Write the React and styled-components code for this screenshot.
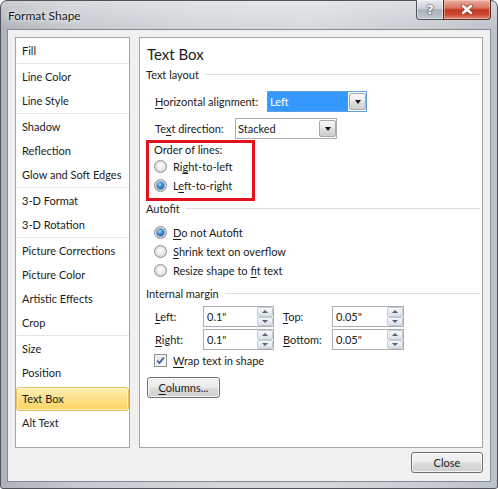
import React from 'react';
import styled, { createGlobalStyle, css } from 'styled-components';

const GlobalStyle = createGlobalStyle`
  html, body { margin: 0; padding: 0; }
  body {
    width: 498px; height: 489px; overflow: hidden;
    font-family: Lato, "Liberation Sans", sans-serif;
    font-size: 11px; color: #1b1b1b;
  }
  * { box-sizing: border-box; }
  u { text-decoration-thickness: 1px; text-underline-offset: 2px; }
`;

const Window = styled.div`
  width: 498px; height: 489px;
  display: flex; flex-direction: column;
  border: 1px solid #4f545a;
  border-radius: 7px 7px 3px 3px;
  padding: 0 6px 6px 6px;
  background:
    linear-gradient(180deg, rgba(255,255,255,0.35) 0px, rgba(255,255,255,0) 28px),
    linear-gradient(90deg, #aeb3b9 0%, #c4c9cf 14%, #d2d6db 40%, #d6dade 62%, #c9ced4 84%, #bcc2c9 100%);
`;

const TitleBar = styled.div`
  height: 28px; flex: none;
  display: flex; align-items: flex-start;
`;

const TitleText = styled.div`
  margin: 7px 0 0 1px;
  line-height: 16px; font-size: 12px; color: #151515;
  text-shadow: 0 0 6px rgba(255,255,255,0.9), 0 0 3px rgba(255,255,255,0.8);
`;

const Captions = styled.div`
  margin-left: auto; margin-top: -1px;
  display: flex;
`;

const HelpCap = styled.div`
  width: 27px; height: 20px;
  display: flex; align-items: center; justify-content: center;
  border: 1px solid #4e545b; border-top: none; border-right: none;
  border-bottom-left-radius: 4px;
  background: linear-gradient(180deg, #e8ebee 0%, #cdd2d7 45%, #aab1b9 52%, #bfc6cd 100%);
  box-shadow: inset 0 0 0 1px rgba(255,255,255,0.45);
  color: #fff; font-weight: 700; font-size: 13px; font-family: "DejaVu Sans", sans-serif;
  text-shadow: 0 0 2px #2a2f36, 0 0 1px #2a2f36;
`;

const CloseCap = styled.div`
  width: 48px; height: 20px;
  display: flex; align-items: center; justify-content: center;
  border: 1px solid #5a2a22; border-top: none;
  border-bottom-right-radius: 4px;
  background: linear-gradient(180deg, #eab0a3 0%, #d9725e 42%, #c13a1f 52%, #cc4a2f 78%, #e2957f 100%);
  box-shadow: inset 0 0 0 1px rgba(255,220,210,0.45);
`;

const Client = styled.div`
  flex: 1; display: flex; flex-direction: column;
  background: #f0f0f0;
  border: 1px solid #838a92;
  padding: 7px 7px 8px 7px;
`;

const Body = styled.div`
  height: 411px; flex: none;
  display: flex; gap: 9px;
`;

const NavPanel = styled.div`
  width: 115px; flex: none;
  background: #fff; border: 1px solid #a2a6ab;
  padding-top: 1px;
  display: flex; flex-direction: column;
`;

const NavItem = styled.div`
  height: 24px; line-height: 24px; padding-left: 6px;
  white-space: nowrap; color: #1b1b1b;
  ${p => p.$selected && css`
    margin-top: 2px;
    line-height: 22px; padding-left: 5px;
    border: 1px solid #e3bf5d; border-radius: 3px;
    background: linear-gradient(180deg, #fef0b3 0%, #fde08a 50%, #fbd465 100%);
    box-shadow: inset 0 0 0 1px rgba(255,255,240,0.6);
  `}
`;

const NavSep = styled.div`
  height: 2px; margin-left: 1px;
  border-top: 1px solid #e6e6e6;
`;

const ContentPanel = styled.div`
  flex: 1;
  background: #fff; border: 1px solid #a2a6ab;
  padding-right: 2px;
  display: flex; flex-direction: column;
`;

const PanelTitle = styled.div`
  margin: 6px 0 0 7px;
  height: 20px; line-height: 20px; font-size: 15px; color: #1b1b1b;
`;

const SectionHeader = styled.div`
  display: flex; align-items: center;
  height: 14px; margin: ${p => p.$mt}px 0 0 6px;
  white-space: nowrap;
  &::after {
    content: ''; flex: 1; height: 1px; margin-left: 6px;
    background: #d6dfe6;
  }
`;

const FieldRow = styled.div`
  display: flex; align-items: center;
  height: 21px; margin: ${p => p.$mt}px 0 0 15px;
`;

const FieldLabel = styled.div`
  width: ${p => p.$w}px; flex: none; white-space: nowrap;
  padding-left: ${p => p.$pad || 0}px;
`;

const Combo = styled.div`
  width: ${p => p.$w}px; height: 21px; flex: none;
  display: flex; align-items: stretch;
  border: 1px solid ${p => (p.$focused ? '#5f9ee0' : '#abadb3')};
  background: #fff;
`;

const ComboValue = styled.div`
  flex: 1; line-height: 19px; padding-left: 2px;
  ${p => p.$focused
    ? css`background: #3399ff; color: #fff; margin-right: 1px;`
    : css`color: #1b1b1b;`}
`;

const ComboArrow = styled.div`
  width: 17px; flex: none; margin: 1px 0 1px 0;
  display: flex; align-items: center; justify-content: center;
  border: 1px solid #a9a9a9; border-radius: 2px;
  background: linear-gradient(180deg, #f7f7f7 0%, #ebebeb 48%, #dddddd 52%, #cfcfcf 100%);
  &::after {
    content: ''; width: 0; height: 0;
    border-left: 3.5px solid transparent; border-right: 3.5px solid transparent;
    border-top: 4px solid #111;
  }
`;

const RedBox = styled.div`
  width: 109px; height: 61px; flex: none;
  margin: 1px 0 0 6px;
  border: 3px solid #e0121c;
  padding: 0 0 3px 5px;
  display: flex; flex-direction: column;
`;

const GroupCaption = styled.div`
  height: 13px; line-height: 13px; margin-bottom: 1px; white-space: nowrap;
`;

const RadioRow = styled.div`
  display: flex; align-items: center; gap: 6px;
  height: 19px; white-space: nowrap;
  margin: ${p => p.$mt || 0}px 0 0 ${p => p.$ml || 0}px;
`;

const Radio = styled.span`
  width: 13px; height: 13px; flex: none; border-radius: 50%;
  display: inline-flex; align-items: center; justify-content: center;
  border: 1px solid #8a8e93;
  background: radial-gradient(circle at 50% 45%, #ffffff 0%, #f1f1f1 35%, #d4d4d4 75%, #c6c6c6 100%);
  ${p => p.$checked && css`
    &::after {
      content: ''; width: 7px; height: 7px; border-radius: 50%;
      background: radial-gradient(circle at 40% 35%, #a6dcff 0%, #3b8fd8 40%, #1a5597 85%);
      box-shadow: 0 0 0 1px rgba(30,80,140,0.5);
    }
  `}
`;

const MarginGrid = styled.div`
  display: grid;
  grid-template-columns: 48px 71px 58px 72px;
  grid-auto-rows: 21px;
  row-gap: 2px;
  align-items: center;
  margin: 6px 0 0 15px;
`;

const SpinBox = styled.div`
  width: ${p => p.$w}px; height: 21px;
  display: flex; align-items: stretch;
  border: 1px solid #abadb3; background: #fff;
`;

const SpinValue = styled.div`
  flex: 1; line-height: 19px; padding-left: 3px; color: #1b1b1b;
`;

const SpinButtons = styled.div`
  width: 16px; flex: none;
  display: flex; flex-direction: column;
`;

const SpinBtn = styled.div`
  flex: 1;
  display: flex; align-items: center; justify-content: center;
  border: 1px solid #c2cad3; border-radius: 2px;
  background: linear-gradient(180deg, #f6f8fa 0%, #e6ebf0 55%, #d9e0e8 100%);
  &::after {
    content: ''; width: 0; height: 0;
    border-left: 3px solid transparent; border-right: 3px solid transparent;
    ${p => (p.$down
      ? css`border-top: 3px solid #51627a;`
      : css`border-bottom: 3px solid #51627a;`)}
  }
`;

const CheckRow = styled.label`
  display: flex; align-items: center; gap: 6px;
  height: 19px; margin: 1px 0 0 14px; white-space: nowrap;
`;

const CheckBox = styled.span`
  width: 13px; height: 13px; flex: none;
  display: inline-flex; align-items: center; justify-content: center;
  border: 1px solid #8e8f8f;
  background: linear-gradient(135deg, #d9dde2 0%, #f1f3f5 60%, #fbfbfb 100%);
  box-shadow: inset 0 0 0 1px #f6f6f6;
`;

const PushButton = styled.button`
  width: ${p => p.$w}px; height: 21px; flex: none;
  margin-left: ${p => p.$ml || 0}px; margin-top: ${p => p.$mt || 0}px;
  padding: 0; font: inherit; color: #1b1b1b;
  border: 1px solid #707070; border-radius: 3px;
  background: linear-gradient(180deg, #f3f3f3 0%, #ebebeb 48%, #dddddd 52%, #cfcfcf 100%);
  box-shadow: inset 0 0 0 1px rgba(255,255,255,0.75);
`;

const Footer = styled.div`
  display: flex; justify-content: flex-end;
  margin-top: 4px;
`;

const navGroups = [
  ['Fill'],
  ['Line Color', 'Line Style'],
  ['Shadow', 'Reflection', 'Glow and Soft Edges'],
  ['3-D Format', '3-D Rotation'],
  ['Picture Corrections', 'Picture Color', 'Artistic Effects', 'Crop'],
  ['Size', 'Position', 'Text Box', 'Alt Text'],
];

function Spinner({ value, w }) {
  return (
    <SpinBox $w={w}>
      <SpinValue>{value}</SpinValue>
      <SpinButtons>
        <SpinBtn />
        <SpinBtn $down />
      </SpinButtons>
    </SpinBox>
  );
}

export default function App() {
  return (
    <>
      <GlobalStyle />
      <Window>
        <TitleBar>
          <TitleText>Format Shape</TitleText>
          <Captions>
            <HelpCap>?</HelpCap>
            <CloseCap>
              <svg width="14" height="11" viewBox="0 0 14 11">
                <path d="M3 2 L11 9 M11 2 L3 9" stroke="#5b2016" strokeWidth="4.2" strokeLinecap="round" opacity="0.55" />
                <path d="M3 2 L11 9 M11 2 L3 9" stroke="#fff" strokeWidth="2.6" strokeLinecap="round" />
              </svg>
            </CloseCap>
          </Captions>
        </TitleBar>
        <Client>
          <Body>
            <NavPanel>
              {navGroups.map((g, gi) => (
                <React.Fragment key={gi}>
                  {gi > 0 && <NavSep />}
                  {g.map(item => (
                    <NavItem key={item} $selected={item === 'Text Box'}>{item}</NavItem>
                  ))}
                </React.Fragment>
              ))}
            </NavPanel>
            <ContentPanel>
              <PanelTitle>Text Box</PanelTitle>
              <SectionHeader $mt={3}>Text layout</SectionHeader>
              <FieldRow $mt={10}>
                <FieldLabel $w={112}><u>H</u>orizontal alignment:</FieldLabel>
                <Combo $w={100} $focused>
                  <ComboValue $focused>Left</ComboValue>
                  <ComboArrow />
                </Combo>
              </FieldRow>
              <FieldRow $mt={6}>
                <FieldLabel $w={80}>Te<u>x</u>t direction:</FieldLabel>
                <Combo $w={102}>
                  <ComboValue>Stacked</ComboValue>
                  <ComboArrow />
                </Combo>
              </FieldRow>
              <RedBox>
                <GroupCaption>Order of lines:</GroupCaption>
                <RadioRow><Radio /><span>Ri<u>g</u>ht-to-left</span></RadioRow>
                <RadioRow><Radio $checked /><span>L<u>e</u>ft-to-right</span></RadioRow>
              </RedBox>
              <SectionHeader $mt={0}>Autofit</SectionHeader>
              <RadioRow $mt={8} $ml={14}><Radio $checked /><span><u>D</u>o not Autofit</span></RadioRow>
              <RadioRow $ml={14}><Radio /><span><u>S</u>hrink text on overflow</span></RadioRow>
              <RadioRow $ml={14}><Radio /><span>Resize shape to <u>f</u>it text</span></RadioRow>
              <SectionHeader $mt={6}>Internal margin</SectionHeader>
              <MarginGrid>
                <FieldLabel><u>L</u>eft:</FieldLabel>
                <Spinner value={'0.1"'} w={71} />
                <FieldLabel $pad={9}><u>T</u>op:</FieldLabel>
                <Spinner value={'0.05"'} w={72} />
                <FieldLabel><u>R</u>ight:</FieldLabel>
                <Spinner value={'0.1"'} w={71} />
                <FieldLabel $pad={9}><u>B</u>ottom:</FieldLabel>
                <Spinner value={'0.05"'} w={72} />
              </MarginGrid>
              <CheckRow>
                <CheckBox>
                  <svg width="9" height="9" viewBox="0 0 9 9">
                    <path d="M1.2 4.6 L3.5 7 L7.8 1.6" fill="none" stroke="#3c5a96" strokeWidth="1.7" />
                  </svg>
                </CheckBox>
                <span><u>W</u>rap text in shape</span>
              </CheckRow>
              <div>
                <PushButton $w={73} $ml={7} $mt={7}><u>C</u>olumns...</PushButton>
              </div>
            </ContentPanel>
          </Body>
          <Footer>
            <PushButton $w={72}>Close</PushButton>
          </Footer>
        </Client>
      </Window>
    </>
  );
}
